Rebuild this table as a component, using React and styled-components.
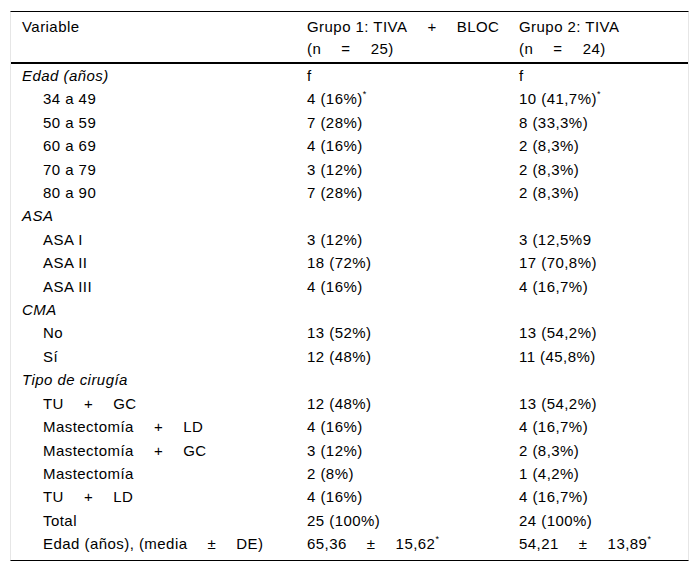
import React from "react";
import styled, { createGlobalStyle } from "styled-components";

const GlobalStyle = createGlobalStyle`
  body {
    margin: 0;
    background: #fff;
  }
`;

const Page = styled.div`
  padding: 11px 10px 0 10px;
`;

const Table = styled.table`
  width: 679px;
  table-layout: fixed;
  border-collapse: separate;
  border-spacing: 0;
  border-top: 1px solid #000;
  border-bottom: 1px solid #000;
  border-left: 1px solid #e6e6e6;
  border-right: 1px solid #e6e6e6;
  font-family: "Liberation Sans", Arial, sans-serif;
  font-size: 15px;
  letter-spacing: 0.45px;
  color: #000;
`;

const HeadCell = styled.th`
  text-align: left;
  font-weight: normal;
  vertical-align: top;
  line-height: 22px;
  padding: 4px 10px 2px 11px;
  border-bottom: 2px solid #000;
  white-space: nowrap;
`;

const Cell = styled.td`
  line-height: 23.4px;
  padding: 0 10px 0 ${(p) => (p.$indent ? 32 : 11)}px;
  padding-bottom: ${(p) => (p.$last ? 4.6 : 0)}px;
  font-style: ${(p) => (p.$section ? "italic" : "normal")};
  white-space: nowrap;
`;

const Star = styled.sup`
  font-size: 9px;
  line-height: 0;
  vertical-align: 7px;
`;

const sp = "\u2003 ";

const sections = [
  {
    title: "Edad (años)",
    g1: "f",
    g2: "f",
    rows: [
      ["34 a 49", "4 (16%)", "10 (41,7%)", true],
      ["50 a 59", "7 (28%)", "8 (33,3%)"],
      ["60 a 69", "4 (16%)", "2 (8,3%)"],
      ["70 a 79", "3 (12%)", "2 (8,3%)"],
      ["80 a 90", "7 (28%)", "2 (8,3%)"],
    ],
  },
  {
    title: "ASA",
    rows: [
      ["ASA I", "3 (12%)", "3 (12,5%9"],
      ["ASA II", "18 (72%)", "17 (70,8%)"],
      ["ASA III", "4 (16%)", "4 (16,7%)"],
    ],
  },
  {
    title: "CMA",
    rows: [
      ["No", "13 (52%)", "13 (54,2%)"],
      ["Sí", "12 (48%)", "11 (45,8%)"],
    ],
  },
  {
    title: "Tipo de cirugía",
    rows: [
      [`TU${sp}+${sp}GC`, "12 (48%)", "13 (54,2%)"],
      [`Mastectomía${sp}+${sp}LD`, "4 (16%)", "4 (16,7%)"],
      [`Mastectomía${sp}+${sp}GC`, "3 (12%)", "2 (8,3%)"],
      ["Mastectomía", "2 (8%)", "1 (4,2%)"],
      [`TU${sp}+${sp}LD`, "4 (16%)", "4 (16,7%)"],
      ["Total", "25 (100%)", "24 (100%)"],
      [
        `Edad (años), (media${sp}±${sp}DE)`,
        `65,36${sp}±${sp}15,62`,
        `54,21${sp}±${sp}13,89`,
        true,
      ],
    ],
  },
];

const App = () => {
  const lastSection = sections.length - 1;

  return (
    <Page>
      <GlobalStyle />
      <Table>
        <colgroup>
          <col style={{ width: 285 }} />
          <col style={{ width: 212 }} />
          <col style={{ width: 180 }} />
        </colgroup>
        <thead>
          <tr>
            <HeadCell>Variable</HeadCell>
            <HeadCell>
              Grupo 1: TIVA{sp}+{sp}BLOC
              <br />
              (n{sp}={sp}25)
            </HeadCell>
            <HeadCell>
              Grupo 2: TIVA
              <br />
              (n{sp}={sp}24)
            </HeadCell>
          </tr>
        </thead>
        <tbody>
          {sections.map((s, si) => (
            <React.Fragment key={s.title}>
              <tr>
                <Cell $section>{s.title}</Cell>
                <Cell>{s.g1}</Cell>
                <Cell>{s.g2}</Cell>
              </tr>
              {s.rows.map(([label, a, b, star], ri) => {
                const last = si === lastSection && ri === s.rows.length - 1;
                return (
                  <tr key={label}>
                    <Cell $indent $last={last}>{label}</Cell>
                    <Cell $last={last}>
                      {a}
                      {star && <Star>*</Star>}
                    </Cell>
                    <Cell $last={last}>
                      {b}
                      {star && <Star>*</Star>}
                    </Cell>
                  </tr>
                );
              })}
            </React.Fragment>
          ))}
        </tbody>
      </Table>
    </Page>
  );
};

export default App;
